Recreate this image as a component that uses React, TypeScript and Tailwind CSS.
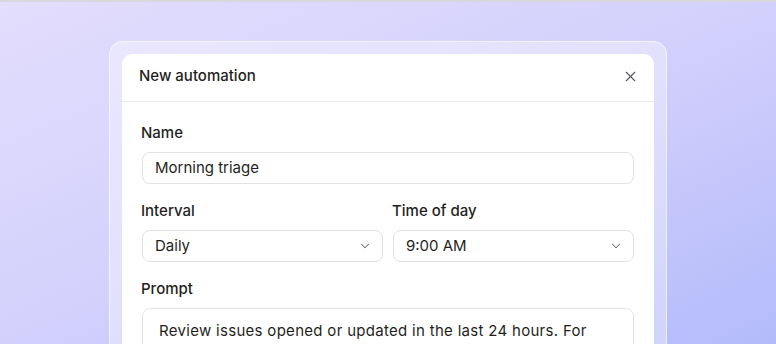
import { X, ChevronDown } from 'lucide-react';

const fieldCls =
  'w-full h-8 rounded-lg border border-[#e2e2e6] bg-white flex items-center px-3 text-[15px] text-[#1f1f22]';

function Select({ value }: { value: string }) {
  return (
    <div className={`${fieldCls} justify-between`}>
      <span>{value}</span>
      <ChevronDown className="w-[14px] h-[14px] text-[#6b6b70] -mr-[2px]" strokeWidth={1.75} />
    </div>
  );
}

export default function App() {
  return (
    <div
      className="w-[776px] h-[344px] overflow-hidden bg-gradient-to-br from-[#e3defd] via-[#d3d0fc] to-[#b3bbfa] border-t-2 border-[#d8d8dc]"
      style={{ fontFamily: 'Inter, "Noto Sans", sans-serif' }}
    >
      <div className="mx-auto mt-[39px] w-[558px] rounded-[14px] bg-white/35 border border-white/60 p-3 pb-0">
        <div className="bg-white rounded-t-[10px] h-[400px]">
          {/* Header */}
          <div className="h-[48px] pl-[17px] pr-[18px] flex items-center justify-between border-b border-[#e9e9ec]">
            <h2 className="text-[15px] font-medium text-[#1f1f22] -mt-[2px]">New automation</h2>
            <X className="w-[17px] h-[17px] text-[#55555a] -mr-[3px] -mt-[2px]" strokeWidth={1.6} />
          </div>

          {/* Body */}
          <div className="px-5 pt-[21px]">
            <label className="block h-5 leading-5 text-[15px] font-medium text-[#1f1f22] -ml-px">Name</label>
            <div className={`${fieldCls} mt-[9px]`}>Morning triage</div>

            <div className="grid grid-cols-2 gap-[10px] mt-[17px]">
              <div>
                <label className="block h-5 leading-5 text-[15px] font-medium text-[#1f1f22] -ml-px">Interval</label>
                <div className="mt-[9px]">
                  <Select value="Daily" />
                </div>
              </div>
              <div>
                <label className="block h-5 leading-5 text-[15px] font-medium text-[#1f1f22] -ml-px">Time of day</label>
                <div className="mt-[9px]">
                  <Select value="9:00 AM" />
                </div>
              </div>
            </div>

            <label className="block mt-[17px] h-5 leading-5 text-[15px] font-medium text-[#1f1f22] -ml-px">Prompt</label>
            <div className="mt-[9px] rounded-lg border border-[#e2e2e6] pl-[16px] pr-[17px] pt-[11px] text-[15px] leading-[22px] tracking-[0.3px] text-[#1f1f22] h-[120px]">
              Review issues opened or updated in the last 24 hours. For each one, summarize the status and flag anything that needs attention.
            </div>
          </div>
        </div>
      </div>
    </div>
  );
}
